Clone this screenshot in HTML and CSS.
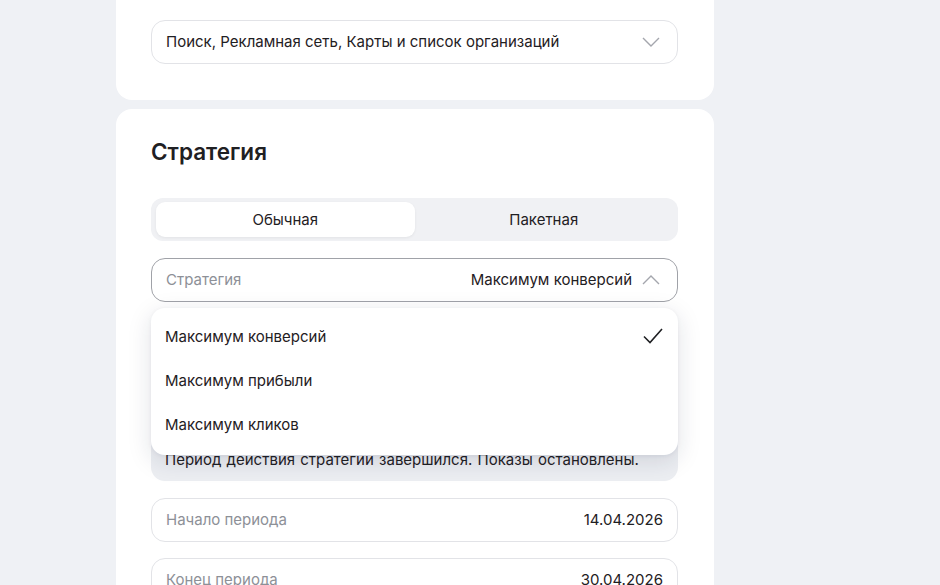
FILE: index.html
```html
<!DOCTYPE html>
<html lang="ru">
<head>
    <meta charset="UTF-8">
    <meta name="viewport" content="width=device-width, initial-scale=1.0">
    <title>Стратегия</title>
    <link rel="stylesheet" href="styles.css">
</head>
<body>
    <div class="page">
        <div class="card card-top">
            <div class="field">
                <span class="value">Поиск, Рекламная сеть, Карты и список организаций</span>
                <svg class="chevron" width="18" height="10" viewBox="0 0 18 10"><path d="M1 1l8 8 8-8" fill="none" stroke="#a4a6ad" stroke-width="1.4"/></svg>
            </div>
        </div>

        <div class="card">
            <h2>Стратегия</h2>

            <div class="segment">
                <div class="tab active">Обычная</div>
                <div class="tab">Пакетная</div>
            </div>

            <div class="select-wrap">
                <div class="field field-open">
                    <span class="label">Стратегия</span>
                    <span class="value">Максимум конверсий</span>
                    <svg class="chevron" width="18" height="10" viewBox="0 0 18 10"><path d="M1 9l8-8 8 8" fill="none" stroke="#a4a6ad" stroke-width="1.4"/></svg>
                </div>
                <!-- открытый список -->
                <ul class="menu">
                    <li class="menu-item">
                        Максимум конверсий
                        <svg width="22" height="18" viewBox="0 0 22 18"><path d="M2 9.5l6 6L20 2" fill="none" stroke="#1f2023" stroke-width="1.6"/></svg>
                    </li>
                    <li class="menu-item">Максимум прибыли</li>
                    <li class="menu-item">Максимум кликов</li>
                </ul>
            </div>

            <div class="notice">
                <p>Период действия стратегии завершился. Показы остановлены.</p>
            </div>

            <div class="field field-date">
                <span class="label">Начало периода</span>
                <span class="value">14.04.2026</span>
            </div>
            <div class="field field-date">
                <span class="label">Конец периода</span>
                <span class="value">30.04.2026</span>
            </div>
        </div>
    </div>
</body>
</html>
```

FILE: styles.css
```css
body {
    margin: 0;
    background: #eff1f5;
    font-family: Inter, "Noto Sans", sans-serif;
    color: #1f2023;
    overflow: hidden;
}

.page {
    width: 598px;
    margin-left: 116px;
    display: flex;
    flex-direction: column;
    gap: 9px;
}

.card {
    background: #fff;
    border-radius: 16px;
    padding: 29px 36px 40px 35px;
}

.card-top {
    border-radius: 0 0 16px 16px;
    padding: 20px 36px 36px 35px;
}

h2 {
    margin: 0;
    font-size: 22.5px;
    line-height: 28px;
    font-weight: 600;
}

.field {
    height: 44px;
    box-sizing: border-box;
    border: 1px solid #e2e3e7;
    border-radius: 14px;
    padding: 0 14px 1px;
    display: flex;
    align-items: center;
    font-size: 15px;
}

.field .value {
    flex: 1;
}

.field .label {
    color: #8d9097;
    flex: 1;
}

.field-open {
    border-color: #a0a2a8;
}

.field-open .value {
    flex: none;
    margin-right: 10px;
}

.chevron {
    margin-right: 3px;
}

.field-date .value {
    flex: none;
}

.segment {
    margin-top: 32px;
    height: 43px;
    box-sizing: border-box;
    background: #f0f1f4;
    border-radius: 12px;
    padding: 4px 5px;
    display: flex;
}

.tab {
    flex: 1;
    display: flex;
    align-items: center;
    justify-content: center;
    font-size: 15px;
    border-radius: 9px;
}

.tab.active {
    background: #fff;
    box-shadow: 0 1px 3px rgba(0, 0, 0, 0.06);
}

.select-wrap {
    position: relative;
    margin-top: 17px;
}

.menu {
    position: absolute;
    top: 50px;
    left: 0;
    right: 0;
    margin: 0;
    padding: 6px 0 9px;
    list-style: none;
    background: #fff;
    border-radius: 14px;
    box-shadow: 0 6px 24px rgba(20, 30, 60, 0.13), 0 1px 4px rgba(20, 30, 60, 0.06);
    z-index: 2;
}

.menu-item {
    height: 44px;
    padding: 0 14px;
    display: flex;
    align-items: center;
    justify-content: space-between;
    font-size: 15px;
}

.notice {
    margin-top: 16px;
    min-height: 163px;
    box-sizing: border-box;
    background: #eceef2;
    border-radius: 14px;
    padding: 0 14px 11px;
    display: flex;
    flex-direction: column;
    justify-content: flex-end;
}

.notice p {
    margin: 0;
    font-size: 15px;
    line-height: 20px;
    word-spacing: 1px;
}

.field-date {
    margin-top: 17px;
}

.field-date + .field-date {
    margin-top: 16px;
}
```
